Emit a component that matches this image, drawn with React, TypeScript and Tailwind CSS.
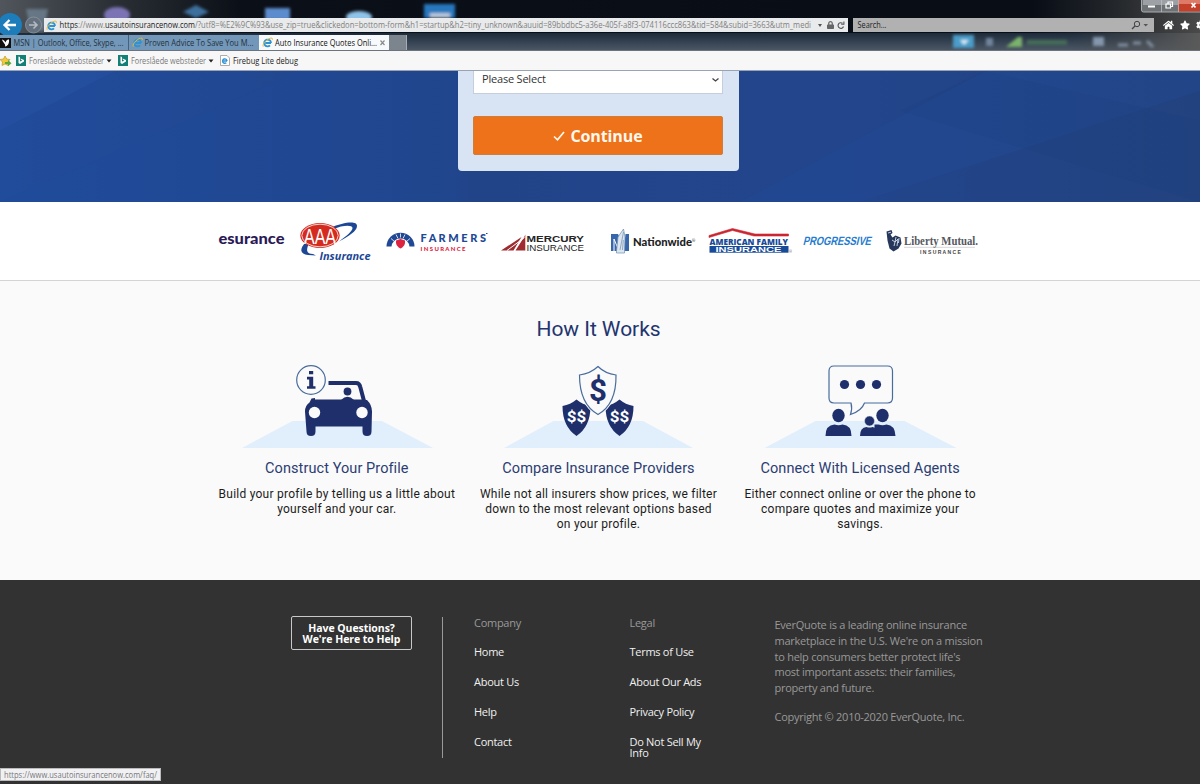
import React from 'react';
import { FaHome, FaStar, FaCog, FaLock } from 'react-icons/fa';

const NAVY = '#1f2f6b';

type TProps = { x: number; y: number; w?: number; s: number; fill: string; font?: string; weight?: number; italic?: boolean; children: string };

function T({ x, y, w, s, fill, font = 'Open Sans', weight = 400, italic, children }: TProps) {
  return (
    <text x={x} y={y} textLength={w} lengthAdjust="spacingAndGlyphs" fontSize={s} fill={fill} fontFamily={`"${font}", sans-serif`} fontWeight={weight} fontStyle={italic ? 'italic' : 'normal'}>
      {children}
    </text>
  );
}

function IeIcon() {
  return (
    <svg className="h-[11px] w-[11px] shrink-0" viewBox="0 0 11 11">
      <path d="M9 6H3.4M9 6a3.4 3.4 0 1 0-1 2.4" fill="none" stroke="#2d93d3" strokeWidth="1.8" />
      <path d="M1.2 9.6C-.3 7 6.500 .2 10 1.200c.7.300.5 1.300.1 2" fill="none" stroke="#e4b93c" strokeWidth="1" />
    </svg>
  );
}

function BingIcon() {
  return (
    <svg className="h-[11px] w-[10px] shrink-0" viewBox="0 0 10 11">
      <rect width="10" height="11" fill="#138078" />
      <path d="M2.500 1.500 4 2.100v4.500L6.300 5.500 4.900 4.800 4.400 3.600 8 4.900v1.500L4 9 2.500 8.100z" fill="#fff" />
    </svg>
  );
}

function Wallpaper() {
  return (
    <svg className="absolute inset-0 h-[51px] w-full" viewBox="0 0 1200 51" preserveAspectRatio="none">
      <defs>
        <linearGradient id="sky" x1="0" x2="1">
          <stop offset="0" stopColor="#50565b" />
          <stop offset=".09" stopColor="#2c3137" />
          <stop offset=".2" stopColor="#0b0f17" />
          <stop offset=".86" stopColor="#080d16" />
          <stop offset=".93" stopColor="#24272b" />
          <stop offset="1" stopColor="#4a4a4a" />
        </linearGradient>
        <linearGradient id="band" x1="0" x2="0" y1="0" y2="1">
          <stop offset="0" stopColor="#1c2b3b" />
          <stop offset="1" stopColor="#4e5967" />
        </linearGradient>
        <linearGradient id="bandSide" x1="0" x2="1">
          <stop offset="0" stopColor="#4a4a4a" stopOpacity="0" />
          <stop offset="1" stopColor="#5a5a5a" />
        </linearGradient>
        <filter id="soft" x="-20%" y="-50%" width="140%" height="200%"><feGaussianBlur stdDeviation="1.800" /></filter>
      </defs>
      <rect width="1200" height="51" fill="url(#sky)" />
      <rect y="33" width="1200" height="18" fill="url(#band)" />
      <rect x="1070" y="33" width="130" height="18" fill="url(#bandSide)" />
      <g filter="url(#soft)">
        <path d="M26 9h22l-4 22H31z" fill="#75899b" opacity=".7" />
        <ellipse cx="117" cy="15" rx="13" ry="8" fill="#7c73b4" />
        <path d="M183 12 196 5l13 7-13 6z" fill="#3d6f9c" />
        <rect x="265" y="8" width="25" height="12" fill="#5b8cce" />
        <ellipse cx="359" cy="17" rx="13" ry="6" fill="#8fc3ea" />
        <rect x="424" y="4" width="31" height="14" fill="#2877be" />
        <rect x="430" y="13" width="20" height="5" fill="#b6c8dc" />
        <rect x="953" y="35" width="21" height="13" fill="#4c9cc8" />
        <path d="m960 40 4 5 5-5z" fill="#d8eefa" />
        <rect x="986" y="38" width="7" height="8" fill="#71849c" />
        <path d="m1006 47 12-10h4v10z" fill="#7cb36c" />
        <rect x="1027" y="40" width="40" height="5" fill="#446b58" />
        <rect x="1093" y="37" width="11" height="9" fill="#8496ac" />
        <path d="M1118 45h10M1133 43h8M1147 41l6 6" stroke="#8290a4" strokeWidth="3" />
      </g>
    </svg>
  );
}

function Chrome() {
  return (
    <header className="relative h-[70px] shrink-0 overflow-hidden bg-[#f7f7f8] font-['Open_Sans',sans-serif] text-[#222]">
      <Wallpaper />
      <svg className="absolute top-0 left-[1141px] h-[13px] w-[59px]" viewBox="0 0 59 13">
        <path d="M.5-1v11a2 2 0 0 0 2 2H60V-1z" fill="#6f7275" stroke="#a9acaf" />
        <rect x="2" width="35" height="5" fill="#9da0a4" />
        <path d="M37.500 0H59v11.500H37.500z" fill="#c4402b" />
        <path d="M37.500 0H59v4H37.500z" fill="#dd7b68" />
        <path d="M20.500 0v12M37.500 0v12" stroke="#c3c5c7" strokeWidth=".7" />
        <rect x="7" y="5.500" width="7" height="2" fill="#fff" />
        <path d="M25 4h4.500v4H25zM27 4V2h4.500v4.500H30" fill="none" stroke="#fff" strokeWidth="1.200" />
        <path d="m50.500 3 4 4.500m0-4.500-4 4.500" stroke="#fff" strokeWidth="1.700" />
      </svg>
      <svg className="absolute top-[12px] left-0 h-[24px] w-[44px]" viewBox="0 0 44 24">
        <circle cx="33.500" cy="13" r="8" fill="#65717e" stroke="#8e979f" strokeWidth=".8" />
        <path d="M29 13h8m-3.500-3.500L37 13l-3.500 3.500" fill="none" stroke="#b5bbc2" strokeWidth="1.600" />
        <circle cx="10" cy="13" r="12" fill="#1d7cba" />
        <path d="M16 13H4.500M9.500 8l-5 5 5 5" fill="none" stroke="#fff" strokeWidth="2.300" />
      </svg>
      <div className="relative flex h-[35px] items-start gap-[5px] pt-[18px] pl-[44px]">
        <div className="flex h-[14px] w-[804px] shrink-0 items-center bg-[#e9eaeb] pl-[2px]">
          <IeIcon />
          <svg className="ml-[2px] h-[14px] w-[753px] shrink-0 overflow-visible" viewBox="0 0 753 14">
            <T x={0.5} y={10.300} w={18.500} s={8.700} fill="#222">https</T>
            <T x={19} y={10.300} w={27} s={8.700} fill="#808080">://www.</T>
            <T x={46} y={10.300} w={90} s={8.700} fill="#222">usautoinsurancenow.com</T>
            <T x={136} y={10.300} w={616} s={8.700} fill="#808080">/?utf8=%E2%9C%93&amp;use_zip=true&amp;clickedon=bottom-form&amp;h1=startup&amp;h2=tiny_unknown&amp;auuid=89bbdbc5-a36e-405f-a8f3-074116ccc863&amp;tid=584&amp;subid=3663&amp;utm_medi</T>
          </svg>
          <svg className="ml-[5px] h-[5px] w-[6px] shrink-0" viewBox="0 0 6 5"><path d="M1 1h4L3 4z" fill="#555" /></svg>
          <FaLock className="ml-[4px] h-[8px] w-[7px] shrink-0 text-[#666]" />
          <svg className="ml-[3px] h-[9px] w-[8px] shrink-0" viewBox="0 0 8 9"><path d="M6.500 5.500a2.800 2.800 0 1 1-1-3.200M6.900.6v2.700H4.200" fill="none" stroke="#555" strokeWidth="1.100" /></svg>
        </div>
        <div className="flex h-[14px] w-[301px] shrink-0 items-center justify-between bg-[#b1b1b1] pr-[5px] pl-[4px]">
          <svg className="h-[14px] w-[40px] overflow-visible" viewBox="0 0 40 14"><T x={0.5} y={10.300} w={29} s={8.700} fill="#222">Search...</T></svg>
          <svg className="h-[10px] w-[18px]" viewBox="0 0 18 10">
            <circle cx="6" cy="4" r="2.700" fill="none" stroke="#444" />
            <path d="M4 6 1 9" stroke="#444" strokeWidth="1.300" />
            <path d="M12.500 4h4.500l-2.250 2.500z" fill="#555" />
          </svg>
        </div>
        <div className="ml-[4px] flex h-[14px] shrink-0 items-center gap-[6px] text-white">
          <FaHome className="h-[10px] w-[11px]" />
          <FaStar className="h-[10px] w-[10px]" />
          <FaCog className="h-[10px] w-[10px]" />
        </div>
      </div>
      <div className="relative flex h-[16px] border-b border-[#6b747e]">
        <div className="flex w-[128px] items-center bg-[#7297b8]">
          <svg className="h-[10px] w-[11px] shrink-0" viewBox="0 0 11 10"><rect width="11" height="10" fill="#101010" /><path d="M2 1.500c2 .2 3 2 3.500 3C6 2 8 1.500 9 1.500 9.500 5 8 8 5 8.500 6 6 3 5 2 1.500z" fill="#fff" /></svg>
          <svg className="h-[15px] w-[116px] shrink-0 overflow-visible" viewBox="0 0 116 15"><T x={2.500} y={10.700} w={110} s={8.700} fill="#26323d">MSN | Outlook, Office, Skype, ...</T></svg>
        </div>
        <div className="flex w-[131px] items-center border-l border-[#46627b] bg-[#7297b8] pl-[3px]">
          <IeIcon />
          <svg className="h-[15px] w-[115px] shrink-0 overflow-visible" viewBox="0 0 115 15"><T x={1.500} y={10.700} w={109} s={8.700} fill="#26323d">Proven Advice To Save You M...</T></svg>
        </div>
        <div className="flex w-[130px] items-center bg-[#f8f9fa] pl-[3px]">
          <IeIcon />
          <svg className="h-[15px] w-[115px] shrink-0 overflow-visible" viewBox="0 0 115 15"><T x={2} y={10.700} w={102} s={8.700} fill="#111">Auto Insurance Quotes Onli...</T><path d="m107.500 5.500 4 4.500m0-4.500-4 4.500" stroke="#8b8b8b" strokeWidth="1.200" /></svg>
        </div>
        <div className="w-[18px] border-r border-[#a5acb3] bg-[#7c858d]" />
      </div>
      <div className="relative flex h-[19px] items-center">
        <svg className="h-[12px] w-[12px]" viewBox="0 0 12 12"><path d="m5 1 1.700 3 3.300.5L7.700 7l.5 3.500L5 9l-3 1.500L2.500 7 0 4.500 3.500 4z" fill="#f5c83a" stroke="#ba9a32" strokeWidth=".7" /><path d="M5 7h3V5l3.500 3.200L8 11.300V9H5z" fill="#5aab3f" /></svg>
        <span className="ml-[4px]"><BingIcon /></span>
        <svg className="h-[19px] w-[92px] overflow-visible" viewBox="0 0 92 19"><T x={3} y={12.500} w={75} s={8.700} fill="#777">Foreslåede websteder</T><path d="M80.500 8.500h5L83 11.500z" fill="#222" /></svg>
        <BingIcon />
        <svg className="h-[19px] w-[92px] overflow-visible" viewBox="0 0 92 19"><T x={3} y={12.500} w={75} s={8.700} fill="#777">Foreslåede websteder</T><path d="M80.500 8.500h5L83 11.500z" fill="#222" /></svg>
        <svg className="h-[11px] w-[10px]" viewBox="0 0 10 11"><path d="M.5.500h6.500l2.500 2.500v7.500h-9z" fill="#fff" stroke="#999" strokeWidth=".8" /><path d="M7 6H3.500M7 6a2.200 2.200 0 1 0-.7 1.700" fill="none" stroke="#2d93d3" strokeWidth="1.400" /></svg>
        <svg className="h-[19px] w-[80px] overflow-visible" viewBox="0 0 80 19"><T x={3} y={12.500} w={65} s={8.700} fill="#222">Firebug Lite debug</T></svg>
      </div>
    </header>
  );
}

function Hero() {
  return (
    <section className="relative h-[132px] shrink-0 overflow-hidden border-t border-[#9aa3b3] bg-[#214489]">
      <svg className="absolute inset-0 h-full w-full" viewBox="0 0 1200 132" preserveAspectRatio="none">
        <defs>
          <linearGradient id="hero" x1="0" x2="1"><stop offset="0" stopColor="#214c9b" /><stop offset=".4" stopColor="#214489" /><stop offset=".7" stopColor="#22458c" /><stop offset="1" stopColor="#22427f" /></linearGradient>
        </defs>
        <rect width="1200" height="132" fill="url(#hero)" />
        <path d="M0 0h115L0 60z" fill="#2a57a8" opacity=".35" />
        <path d="M0 132 300 0h160v132z" fill="#1d4a9c" opacity=".2" />
        <path d="M740 132 985 0h215v20L860 132z" fill="#2550a0" opacity=".25" />
        <path d="m900 40 300 92V50L985 0z" fill="#1c3a77" opacity=".15" />
      </svg>
      <div className="relative ml-[458px] h-[100px] w-[281px] rounded-b-[4px] bg-[#d8e4f3] pr-[16px] pl-[15px]">
        <div className="flex h-[23px] items-start justify-between border border-t-0 border-[#c5cfdb] bg-white pr-[2px] pl-[8px] font-['Open_Sans',sans-serif] text-[11px] leading-[16px] text-[#333]">
          <span className="-tracking-[0.200px]">Please Select</span>
          <svg className="mt-[6px] h-[6px] w-[9px]" viewBox="0 0 9 6"><path d="m1.500 1.500 3 2.500 3-2.500" fill="none" stroke="#444" strokeWidth="1.300" /></svg>
        </div>
        <button className="mt-[22px] flex h-[39px] w-full items-center justify-center gap-[5px] rounded-[2px] border border-[#cf7d3a] bg-[#ee7219] font-['Open_Sans',sans-serif] text-[16px] font-bold text-[#fff8ee]">
          <svg className="h-[12px] w-[12px]" viewBox="0 0 12 12"><path d="m1 6.500 3.500 3.300L11 2" fill="none" stroke="#fff8ee" strokeWidth="1.700" /></svg>
          <span className="leading-none -tracking-[0.100px]">Continue</span>
        </button>
      </div>
    </section>
  );
}

function Logos() {
  return (
    <section className="h-[79px] shrink-0 border-b border-[#d4d4d4] bg-white">
      <svg className="h-[78px] w-[1200px]" viewBox="0 202 1200 78">
        <T x={218.500} y={244.300} w={66} s={14.200} fill="#2b1a56" font="Lato" weight={900}>esurance</T>

        <path d="M330 228c14-6 27-7.500 27-2 0 5-8 10-18 15.500 8-6 13.500-10.500 13.500-13.500 0-3.500-10-3-19 1z" fill="#1b4795" />
        <path d="M306 242c-7 7-6 12 2 13l8 .500-3-1.500c-7-.300-7-4-4-11z" fill="#1b4795" />
        <ellipse cx="320" cy="235.500" rx="19.700" ry="12.500" fill="#d52b1e" />
        <ellipse cx="320" cy="235.500" rx="18.200" ry="11.300" fill="none" stroke="#fff" strokeWidth=".8" />
        <T x={304} y={243.500} w={32} s={22} fill="#fff" font="Liberation Sans" weight={400}>AAA</T>
        <T x={319.500} y={259.800} w={51} s={11} fill="#1b4795" weight={700} italic>Insurance</T>

        <path d="M386.500 246.500a14 13.800 0 0 1 28 0z" fill="#214894" />
        <path d="M391.500 247a9 8.500 0 0 1 18 0z" fill="#fff" />
        <path d="M391 238.500l3.500 3M396 234.500l2 4M405 234.500l-2 4M410 238.500l-3.500 3M400.500 233.500v4" stroke="#fff" strokeWidth=".8" />
        <path d="M396 240.500 400.500 239l4.500 1.500c.5 4-1.500 6.500-4.500 8-3-1.500-5-4-4.500-8z" fill="#dc2441" />
        <T x={420.500} y={242} w={65.500} s={10.500} fill="#214894" font="Lato" weight={900}>F A R M E R S</T>
        <path d="M486 233.500h1.500" stroke="#214894" strokeWidth="1" />
        <T x={420.500} y={250.500} w={45} s={6} fill="#dc2441" font="Lato" weight={900}>I N S U R A N C E</T>

        <path d="m501 250.500 20.500-13.500-8 13.500zM515.500 250.500l9-14 .8-2v16z" fill="#9e2b2f" />
        <path d="m507 250.500 17.500-13" stroke="#fff" strokeWidth="1" />
        <T x={526.500} y={242.200} w={57.500} s={9.800} fill="#252525" font="Liberation Sans" weight={700}>MERCURY</T>
        <T x={526.500} y={251} w={57.500} s={9.600} fill="#252525" font="Liberation Sans">INSURANCE</T>

        <path d="M611 234h7l3 6v11h-10zM625.500 234H629v17h-5.500z" fill="#3766ab" />
        <path d="M614 251v-12l5 12" stroke="#fff" fill="none" />
        <path d="m616.500 251 1.500-14 5.500-8 1.500 8-.5 16h-8z" fill="#dce6f0" stroke="#6d8dad" strokeWidth=".7" />
        <path d="m620 250 3.500-18M622.500 250l.8-10" stroke="#6d8dad" strokeWidth=".7" />
        <T x={633} y={246.300} w={59} s={11.200} fill="#222" font="Lato" weight={900}>Nationwide</T>
        <T x={692} y={242} s={4} fill="#222">®</T>

        <path d="M709 235.500 732.500 228.500 755 234H788.500v2H754L732.500 230.500 709 237.500z" fill="#ca2531" stroke="#ca2531" strokeWidth=".6" />
        <T x={709.500} y={244.800} w={78.500} s={9} fill="#174a97" weight={800}>AMERICAN FAMILY</T>
        <rect x="709.500" y="246" width="79" height="6.700" fill="#174a97" />
        <T x={715.500} y={251.600} w={66} s={6.500} fill="#fff" font="Liberation Sans" weight={700}>INSURANCE</T>
        <T x={789} y={253} s={3.500} fill="#555">®</T>

        <g transform="translate(60.500 0) skewX(-14)">
          <T x={803.500} y={245.300} w={68} s={12} fill="#257cce" font="Liberation Sans" weight={700}>PROGRESSIVE</T>
        </g>

        <path d="m886.500 231.500 5-1.500 1 3-2 1.500 2 3 3-2 5 2 1 6-3 5-5 3-4-3-2-8z" fill="#27375c" />
        <path d="m888 233 3-.8M892 240l3 2-1 4M896 237l-1 5 3-3-1 7M899 238l-.5 5" stroke="#d4deed" strokeWidth=".9" fill="none" />
        <T x={904} y={245} w={74} s={11.800} fill="#56585f" font="Liberation Serif" weight={700}>Liberty Mutual.</T>
        <path d="M904 247.300h71" stroke="#aaa" strokeWidth=".5" />
        <T x={920} y={253.500} w={41} s={5.300} fill="#444" font="Liberation Sans" weight={700}>I N S U R A N C E</T>
      </svg>
    </section>
  );
}

function CarArt() {
  return (
    <svg className="h-[85px] w-[192px]" viewBox="241 364 192 85">
      <path d="M242 448 292.500 421H382l51 27z" fill="#e0effb" />
      <path d="M328.500 383H356q3.500 0 4.300 4l3.700 14" fill="none" stroke={NAVY} strokeWidth="4" />
      <circle cx="347.500" cy="391.500" r="3.900" fill={NAVY} />
      <path d="M341 400q6.500-6.500 13 0z" fill={NAVY} />
      <path d="M311.500 398.500 315 398v1.500h46l6 .500q5 5 5 11.500l-.5 20q0 4.500-4.500 4.500t-4.500-4.500V426.500h-47V431.500q0 4.500-4.500 4.500t-4.500-4.500L305 411.500q0-6 4.500-9z" fill={NAVY} />
      <circle cx="314.500" cy="412.500" r="5.700" fill="#fafafa" /><circle cx="362" cy="412.500" r="5.700" fill="#fafafa" />
      <circle cx="311" cy="380" r="14.300" fill="#fafafa" stroke="#496c9d" strokeWidth="1.200" />
      <path d="M309 371h4.200v3.200h-4.200zM307 376.700h6.200v9.500h2.300v2.600H307v-2.600h2.200v-6.800H307z" fill={NAVY} />
    </svg>
  );
}

function ShieldArt() {
  return (
    <svg className="h-[85px] w-[192px]" viewBox="502.500 364 192 85">
      <path d="M504.500 448 554 421h89.500l50 27z" fill="#e0effb" />
      {[577, 620].map((x) => (
        <g key={x} transform={`translate(${x} 399.500)`}>
          <path d="M0 0q6 5 14 6.500Q14 27 0 36.500-14 27-14 6.500-6 5 0 0z" fill={NAVY} />
          <T x={-9.700} y={22.800} w={19.500} s={15.500} fill="#fff" font="Roboto" weight={700}>$$</T>
        </g>
      ))}
      <path d="M598.500 366.500q7 7 18 8.500.5 29-18 39.500Q580 404 580 375q11-1.500 18.500-8.500z" fill="#fafafa" stroke="#fafafa" strokeWidth="3" />
      <path d="M598.500 366.500q7 7 18 8.500.5 29-18 39.500Q580 404 580 375q11-1.500 18.500-8.500z" fill="#fafafa" stroke="#496c9d" strokeWidth="1.200" />
      <T x={589.500} y={400.500} w={18} s={31} fill={NAVY} font="Roboto" weight={700}>$</T>
    </svg>
  );
}

function AgentsArt() {
  return (
    <svg className="h-[85px] w-[192px]" viewBox="763.500 364 192 85">
      <path d="M764 448 815 421h89l52 27z" fill="#e0effb" />
      <path d="M833.500 366h53.500q5 0 5 5v27q0 5-5 5h-23q-3 8-14 11.500 2-6 .5-11.500H833.500q-5 0-5-5v-27q0-5 5-5z" fill="#fafafa" stroke="#496c9d" strokeWidth="1.200" />
      <circle cx="844" cy="384.500" r="4.600" fill={NAVY} /><circle cx="860" cy="384.500" r="4.600" fill={NAVY} /><circle cx="876" cy="384.500" r="4.600" fill={NAVY} />
      <ellipse cx="838" cy="415.500" rx="6.200" ry="6.800" fill={NAVY} />
      <path d="M825 436q0-11 9-11.500 4 1.500 8 0 9 .5 9 11.500z" fill={NAVY} />
      <ellipse cx="882" cy="415.500" rx="6.200" ry="6.800" fill={NAVY} />
      <path d="M874 436v-11.500h4q4 1.500 8 0 8.500.5 9 11.500z" fill={NAVY} />
      <circle cx="869" cy="421" r="5" fill={NAVY} stroke="#e0effb" strokeWidth=".5" />
      <path d="M859.500 436q0-8.500 6.500-9 3 1 6 0l3 1v8z" fill={NAVY} />
    </svg>
  );
}

const steps = [
  { art: <CarArt />, title: 'Construct Your Profile', lines: ['Build your profile by telling us a little about', 'yourself and your car.'] },
  { art: <ShieldArt />, title: 'Compare Insurance Providers', lines: ['While not all insurers show prices, we filter', 'down to the most relevant options based', 'on your profile.'] },
  { art: <AgentsArt />, title: 'Connect With Licensed Agents', lines: ['Either connect online or over the phone to', 'compare quotes and maximize your', 'savings.'] },
];

function HowItWorks() {
  return (
    <section className="h-[299px] shrink-0 bg-[#fafafa] pt-[35px] pl-[206px] font-['Roboto',sans-serif]">
      <h2 className="w-[785px] text-center text-[21px] leading-[26px] -tracking-[0.050px] text-[#22356f]">How It Works</h2>
      <div className="mt-[22px] grid w-[785px] grid-cols-3">
        {steps.map((s) => (
          <article key={s.title} className="flex flex-col items-center text-center whitespace-nowrap">
            {s.art}
            <h3 className="mt-[10px] text-[14.500px] leading-[20px] tracking-[0.080px] text-[#2b3d73]">{s.title}</h3>
            <p className="mt-[8px] text-[12px] leading-[15px] tracking-[0.240px] text-[#1c1c1c]">
              {s.lines.map((l) => <span key={l} className="block">{l}</span>)}
            </p>
          </article>
        ))}
      </div>
    </section>
  );
}

function LinkColumn({ title, items }: { title: string; items: string[] }) {
  return (
    <nav className="flex flex-col text-[11px] leading-[11px] -tracking-[0.280px]">
      <h4 className="text-[#999]">{title}</h4>
      <ul className="mt-[18px] flex flex-col gap-[19px] text-[#f0f0f0]">
        {items.map((i) => <li key={i} className="whitespace-pre-line">{i}</li>)}
      </ul>
    </nav>
  );
}

function Footer() {
  return (
    <footer className="relative flex h-[204px] shrink-0 items-start bg-[#323232] pt-[36px] pl-[291px] font-['Open_Sans',sans-serif]">
      <a className="flex h-[34px] w-[121px] flex-col justify-center rounded-[2px] border border-[#c8c8c8] pt-px text-center text-[10.500px] leading-[10.500px] font-bold -tracking-[0.050px] text-white">
        <span>Have Questions?</span>
        <span>We're Here to Help</span>
      </a>
      <div className="mt-px ml-[30px] h-[141px] w-px bg-[#999]" />
      <div className="mt-px ml-[31px] w-[155.500px]"><LinkColumn title="Company" items={['Home', 'About Us', 'Help', 'Contact']} /></div>
      <div className="mt-px w-[145px]"><LinkColumn title="Legal" items={['Terms of Use', 'About Our Ads', 'Privacy Policy', 'Do Not Sell My\nInfo']} /></div>
      <div className="mt-px w-[230px] text-[11px] leading-[15.800px] -tracking-[0.250px] whitespace-nowrap text-[#999]">
        <p>EverQuote is a leading online insurance<br />marketplace in the U.S. We're on a mission<br />to help consumers better protect life's<br />most important assets: their families,<br />property and future.</p>
        <p className="mt-[13.500px]">Copyright © 2010-2020 EverQuote, Inc.</p>
      </div>
      <div className="absolute bottom-[3px] left-0 flex h-[13px] w-[161px] items-center border border-[#bbb] bg-[#f1f1f4]">
        <svg className="h-[11px] w-[159px] overflow-visible" viewBox="0 0 159 11"><T x={3} y={8.500} w={153} s={8.700} fill="#777">https://www.usautoinsurancenow.com/faq/</T></svg>
      </div>
    </footer>
  );
}

export default function App() {
  return (
    <div className="flex h-[784px] w-[1200px] flex-col overflow-hidden bg-white">
      <Chrome />
      <Hero />
      <Logos />
      <HowItWorks />
      <Footer />
    </div>
  );
}
